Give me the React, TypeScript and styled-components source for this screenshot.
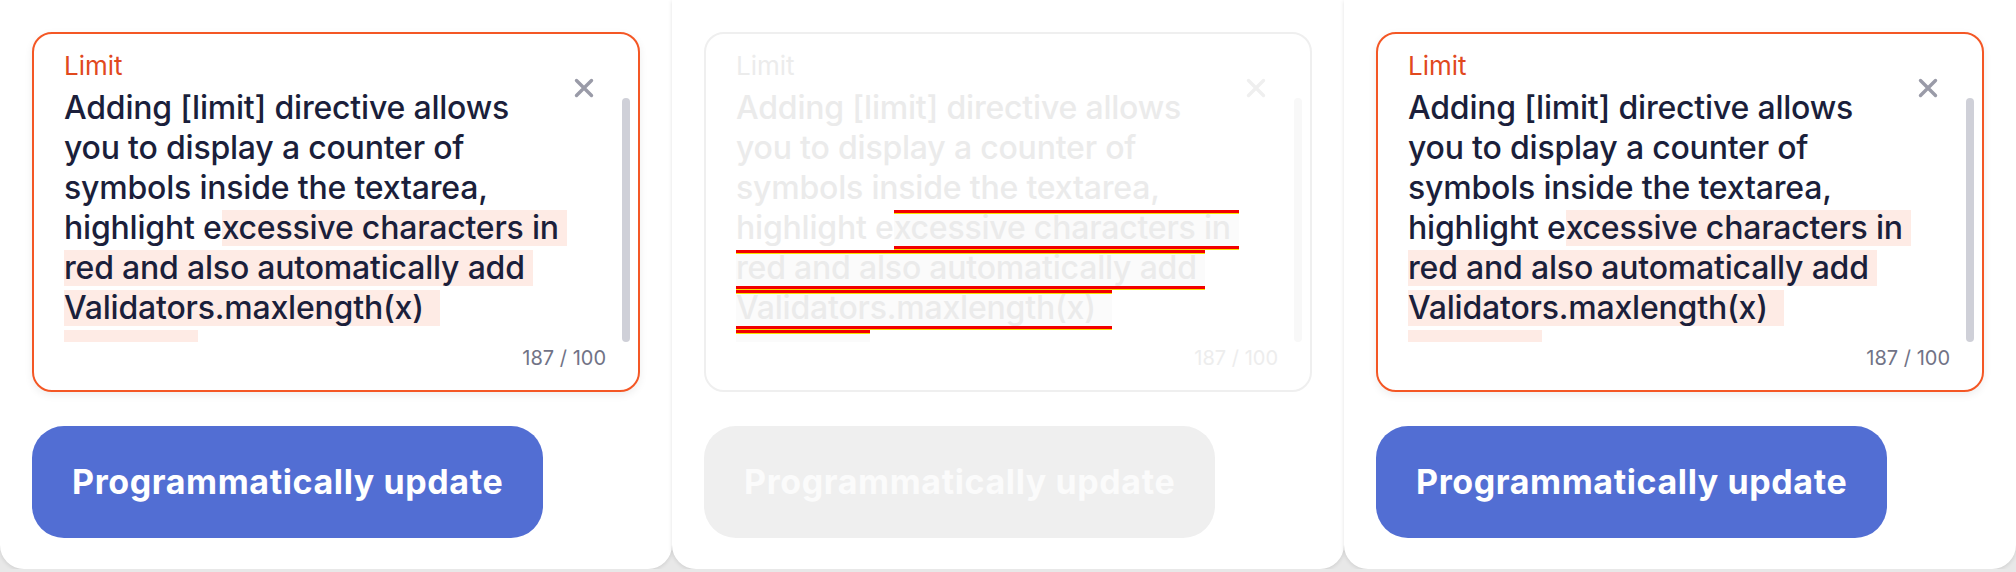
import React from "react";
import styled, { createGlobalStyle } from "styled-components";

const GlobalStyle = createGlobalStyle`
  html, body { margin: 0; padding: 0; background: #e8e8e8; }
  body { font-family: Inter, "Noto Sans", sans-serif; -webkit-font-smoothing: antialiased; }
  * { box-sizing: border-box; }
`;

const Row = styled.div`
  display: flex;
  width: 2016px;
`;

const Panel = styled.section`
  width: 672px;
  height: 569px;
  flex: none;
  background: #fff;
  border-radius: 0 0 24px 24px;
  box-shadow: 0 1px 4px rgba(0, 0, 0, 0.12);
  padding: 32px 32px 0;
  display: flex;
  flex-direction: column;
  align-items: flex-start;
  gap: 34px;
`;

const Field = styled.div<{ $disabled?: boolean }>`
  width: 608px;
  height: 360px;
  border: 2px solid ${(p) => (p.$disabled ? "#efefef" : "#f45725")};
  border-radius: 20px;
  background: #fff;
  box-shadow: ${(p) => (p.$disabled ? "none" : "0 3px 8px rgba(0,0,0,0.07)")};
  display: grid;
  grid-template-columns: 510px 20px 28px 8px;
  grid-template-rows: 38px 254px 1fr;
  padding: 16px 8px 0 30px;
`;

const Label = styled.div<{ $disabled?: boolean }>`
  grid-column: 1;
  grid-row: 1;
  font-size: 26px;
  line-height: 32px;
  font-weight: 400;
  color: ${(p) => (p.$disabled ? "#ececec" : "#e1491e")};
`;

const Viewport = styled.div`
  grid-column: 1;
  grid-row: 2;
  overflow: hidden;
  height: 254px;
`;

const Line = styled.div<{ $disabled?: boolean }>`
  height: 40px;
  font-size: 32px;
  font-weight: 500;
  letter-spacing: -0.2px;
  line-height: 40px;
  white-space: pre;
  color: ${(p) => (p.$disabled ? "#ebebeb" : "#1b1f3b")};
`;

const Mark = styled.span<{ $disabled?: boolean }>`
  display: inline-block;
  vertical-align: top;
  height: 36px;
  line-height: 36px;
  margin-top: 2px;
  background: ${(p) => (p.$disabled ? "#fbfbfb" : "#feebe5")};
  box-shadow: ${(p) =>
    p.$disabled
      ? "inset 0 3px 0 #f20000, inset 0 4px 0 #f6e200, 0 3px 0 #f20000, 0 4px 0 #f6e200"
      : "none"};
`;

const Close = styled.button<{ $disabled?: boolean }>`
  grid-column: 2;
  grid-row: 1 / 3;
  align-self: start;
  margin-top: 28px;
  width: 20px;
  height: 20px;
  padding: 0;
  border: none;
  background: none;
  color: ${(p) => (p.$disabled ? "#efefef" : "#9a9ba8")};
  display: flex;
`;

const Scrollbar = styled.div<{ $disabled?: boolean }>`
  grid-column: 4;
  grid-row: 1 / 3;
  margin-top: 48px;
  height: 244px;
  width: 8px;
  border-radius: 4px;
  background: ${(p) => (p.$disabled ? "#f8f8f8" : "#cfd0d8")};
`;

const Counter = styled.div<{ $disabled?: boolean }>`
  grid-column: 1 / 4;
  grid-row: 3;
  justify-self: end;
  align-self: start;
  margin-top: 4px;
  margin-right: 16px;
  font-size: 20px;
  line-height: 24px;
  font-weight: 400;
  color: ${(p) => (p.$disabled ? "#ededed" : "#717386")};
`;

const Button = styled.button<{ $disabled?: boolean }>`
  height: 112px;
  padding: 0 40px;
  border: none;
  border-radius: 32px;
  background: ${(p) => (p.$disabled ? "#efefef" : "#526ed3")};
  color: ${(p) => (p.$disabled ? "#fbfbfb" : "#ffffff")};
  font-family: Inter, "Noto Sans", sans-serif;
  font-weight: 700;
  font-size: 34px;
  letter-spacing: 0.6px;
  line-height: 40px;
  cursor: ${(p) => (p.$disabled ? "default" : "pointer")};
`;

const CloseIcon = () => (
  <svg width="20" height="20" viewBox="0 0 20 20" fill="none">
    <path
      d="M2.5 2.5 L17.5 17.5 M17.5 2.5 L2.5 17.5"
      stroke="currentColor"
      strokeWidth="3.4"
      strokeLinecap="round"
    />
  </svg>
);

const LimitField = ({ disabled }: { disabled?: boolean }) => (
  <Field $disabled={disabled}>
    <Label $disabled={disabled}>Limit</Label>
    <Viewport>
      <Line $disabled={disabled}>Adding [limit] directive allows</Line>
      <Line $disabled={disabled}>you to display a counter of</Line>
      <Line $disabled={disabled}>symbols inside the textarea,</Line>
      <Line $disabled={disabled}>
        highlight e<Mark $disabled={disabled}>{"xcessive characters in "}</Mark>
      </Line>
      <Line $disabled={disabled}>
        <Mark $disabled={disabled}>{"red and also automatically add "}</Mark>
      </Line>
      <Line $disabled={disabled}>
        <Mark $disabled={disabled}>{"Validators.maxlength(x)  "}</Mark>
      </Line>
      <Line $disabled={disabled}>
        <Mark $disabled={disabled} style={{ width: 134 }} />
      </Line>
    </Viewport>
    <Close $disabled={disabled} aria-label="Clear">
      <CloseIcon />
    </Close>
    <Scrollbar $disabled={disabled} />
    <Counter $disabled={disabled}>187 / 100</Counter>
  </Field>
);

export default function App() {
  return (
    <>
      <GlobalStyle />
      <Row>
        <Panel>
          <LimitField />
          <Button>Programmatically update</Button>
        </Panel>
        <Panel>
          <LimitField disabled />
          <Button $disabled disabled>
            Programmatically update
          </Button>
        </Panel>
        <Panel>
          <LimitField />
          <Button>Programmatically update</Button>
        </Panel>
      </Row>
    </>
  );
}
